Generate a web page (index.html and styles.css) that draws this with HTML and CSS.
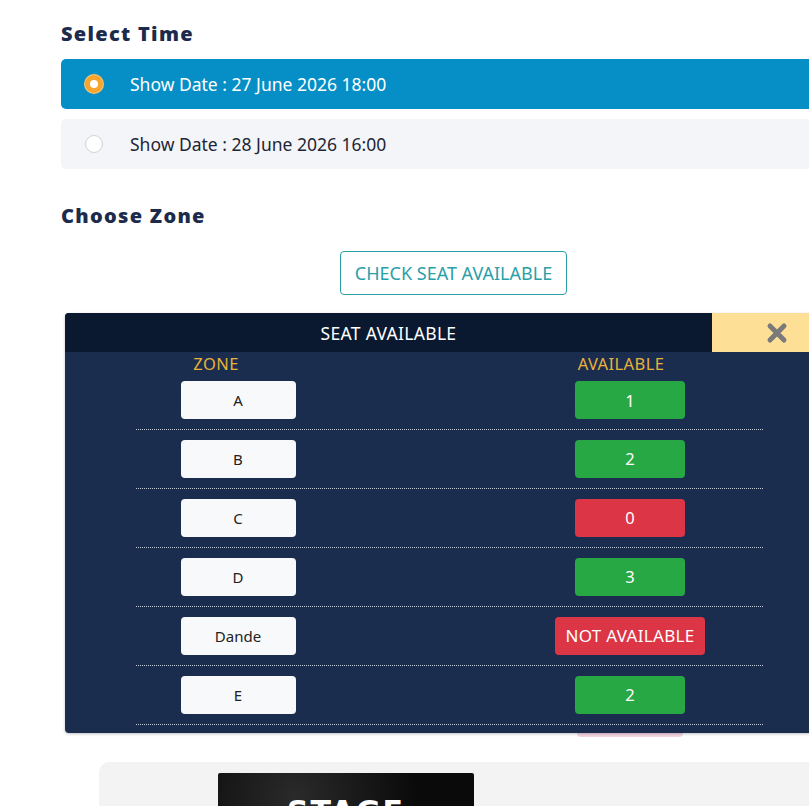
FILE: index.html
```html
<!DOCTYPE html>
<html lang="en">
<head>
    <meta charset="UTF-8">
    <meta name="viewport" content="width=device-width, initial-scale=1.0">
    <title>Booking - Select Time</title>
    <link rel="stylesheet" href="styles.css">
</head>
<body>
    <div class="page">
        <h3 class="section-title">Select Time</h3>
        <div class="time-list">
            <label class="time-option active">
                <span class="radio"></span>
                <span>Show Date : 27 June 2026 18:00</span>
            </label>
            <label class="time-option">
                <span class="radio"></span>
                <span>Show Date : 28 June 2026 16:00</span>
            </label>
        </div>

        <h3 class="section-title zone-title">Choose Zone</h3>
        <div class="check-wrap">
            <button class="check-btn">CHECK SEAT AVAILABLE</button>
        </div>

        <div class="seat-popup">
            <div class="popup-head">
                <div class="popup-title">SEAT AVAILABLE</div>
                <div class="popup-close">
                    <svg width="22" height="22" viewBox="0 0 22 22">
                        <path d="M4 4 L18 18 M18 4 L4 18" stroke="#7a7a7a" stroke-width="5" stroke-linecap="round"/>
                    </svg>
                </div>
            </div>
            <div class="popup-body">
                <div class="seat-head">
                    <span>ZONE</span>
                    <span></span>
                    <span>AVAILABLE</span>
                </div>
                <div id="seatRows"></div>
            </div>
        </div>
        <div class="popup-peek"></div>

        <div class="stage-card">
            <div class="stage">STAGE</div>
        </div>
    </div>

    <script>
        let zones = [
            { name: "A", seats: 1 },
            { name: "B", seats: 2 },
            { name: "C", seats: 0 },
            { name: "D", seats: 3 },
            { name: "Dande", seats: null },
            { name: "E", seats: 2 }
        ];

        let list = document.getElementById("seatRows");
        zones.forEach(zone => {
            let row = document.createElement("div");
            row.className = "seat-row";

            let name = document.createElement("div");
            name.className = "zone-box";
            name.textContent = zone.name;

            let gap = document.createElement("div");

            let count = document.createElement("div");
            if (zone.seats === null) {
                count.className = "count-box empty wide";
                count.textContent = "NOT AVAILABLE";
            } else {
                count.className = zone.seats > 0 ? "count-box" : "count-box empty";
                count.textContent = zone.seats;
            }

            row.appendChild(name);
            row.appendChild(gap);
            row.appendChild(count);
            list.appendChild(row);
        });
    </script>
</body>
</html>
```

FILE: styles.css
```css
body {
    margin: 0;
    font-family: "Noto Sans", "Open Sans", sans-serif;
    background: #ffffff;
    overflow: hidden;
    color: #1e2535;
}
.page {
    width: 785px;
    margin-left: 61px;
    padding-top: 19px;
}
.section-title {
    margin: 0 0 10px;
    font-family: "Noto Sans", sans-serif;
    font-weight: 900;
    font-size: 20px;
    letter-spacing: 1.3px;
    color: #1c2b4b;
    line-height: 30px;
}
.zone-title {
    margin-top: 32px;
}
.time-list {
    display: flex;
    flex-direction: column;
    gap: 10px;
}
.time-option {
    display: flex;
    align-items: center;
    height: 50px;
    padding-left: 24px;
    gap: 27px;
    border-radius: 5px;
    background: #f4f5f8;
    font-size: 17.5px;
    color: #1e2535;
}
.time-option.active {
    background: #058fc6;
    color: #ffffff;
}
.radio {
    width: 18px;
    height: 18px;
    border-radius: 50%;
    border: 1px solid #cfd2d8;
    background: #ffffff;
    box-sizing: border-box;
}
.active .radio {
    border: 5px solid #f6a52e;
    background: #ffffff;
    box-shadow: 0 0 0 1px #f9c77a;
}
.check-wrap {
    display: flex;
    justify-content: center;
    margin-top: 20px;
}
.check-btn {
    height: 44px;
    padding: 0 14px;
    border: 1px solid #2a9fa8;
    border-radius: 4px;
    background: #ffffff;
    color: #2a9fa8;
    font-family: "Noto Sans", sans-serif;
    font-size: 18px;
}
.seat-popup {
    margin: 18px 4px 0;
    border-radius: 4px;
    overflow: hidden;
    background: #1b2d4f;
    box-shadow: 0 1px 3px rgba(0, 0, 0, 0.25);
    position: relative;
    z-index: 2;
}
.popup-head {
    display: flex;
    height: 39px;
}
.popup-title {
    flex: 1;
    display: flex;
    align-items: center;
    justify-content: center;
    background: #0b1930;
    color: #ffffff;
    font-size: 17.5px;
    letter-spacing: 0.3px;
}
.popup-close {
    width: 130px;
    display: flex;
    align-items: center;
    justify-content: center;
    background: #fde096;
}
.popup-body {
    padding: 0 0 8px 71px;
    width: 627px;
}
.seat-head {
    display: grid;
    grid-template-columns: 160px 1fr 284px;
    height: 29px;
    padding-bottom: 8px;
    box-sizing: border-box;
    align-items: center;
    text-align: center;
    color: #e8b23a;
    font-size: 16.5px;
    letter-spacing: 0.4px;
}
.seat-row {
    display: grid;
    grid-template-columns: 204px 1fr 266px;
    align-items: center;
    height: 59px;
    box-sizing: border-box;
    padding-bottom: 1px;
    border-bottom: 1px dotted #c3cad6;
}
.seat-row:first-child {
    height: 49px;
    padding-bottom: 0;
    align-items: start;
}
.zone-box,
.count-box {
    justify-self: center;
    height: 38px;
    border-radius: 4px;
    display: flex;
    align-items: center;
    justify-content: center;
    font-size: 15px;
}
.zone-box {
    width: 115px;
    background: #f8f9fb;
    color: #222222;
}
.count-box {
    width: 110px;
    background: #28a745;
    color: #ffffff;
    font-size: 16.5px;
}
.count-box.empty {
    background: #dc3545;
}
.count-box.wide {
    width: 150px;
    font-size: 17px;
    letter-spacing: 0.3px;
}
.popup-peek {
    height: 4px;
    width: 106px;
    margin-left: 516px;
    background: #f3d6e4;
    border-radius: 0 0 4px 4px;
}
.stage-card {
    margin: 25px 0 0 38px;
    height: 80px;
    padding: 11px 0 0 119px;
    background: #f3f3f3;
    border-radius: 10px 0 0 0;
}
.stage {
    width: 256px;
    height: 120px;
    background: radial-gradient(circle at 30% 20%, #2a2a2a, #0a0a0a 60%);
    border-radius: 2px;
    color: #ffffff;
    font-family: "DejaVu Sans", sans-serif;
    font-weight: bold;
    font-size: 30px;
    line-height: 36px;
    letter-spacing: 2px;
    text-align: center;
    padding-top: 21px;
    box-sizing: border-box;
}
```
